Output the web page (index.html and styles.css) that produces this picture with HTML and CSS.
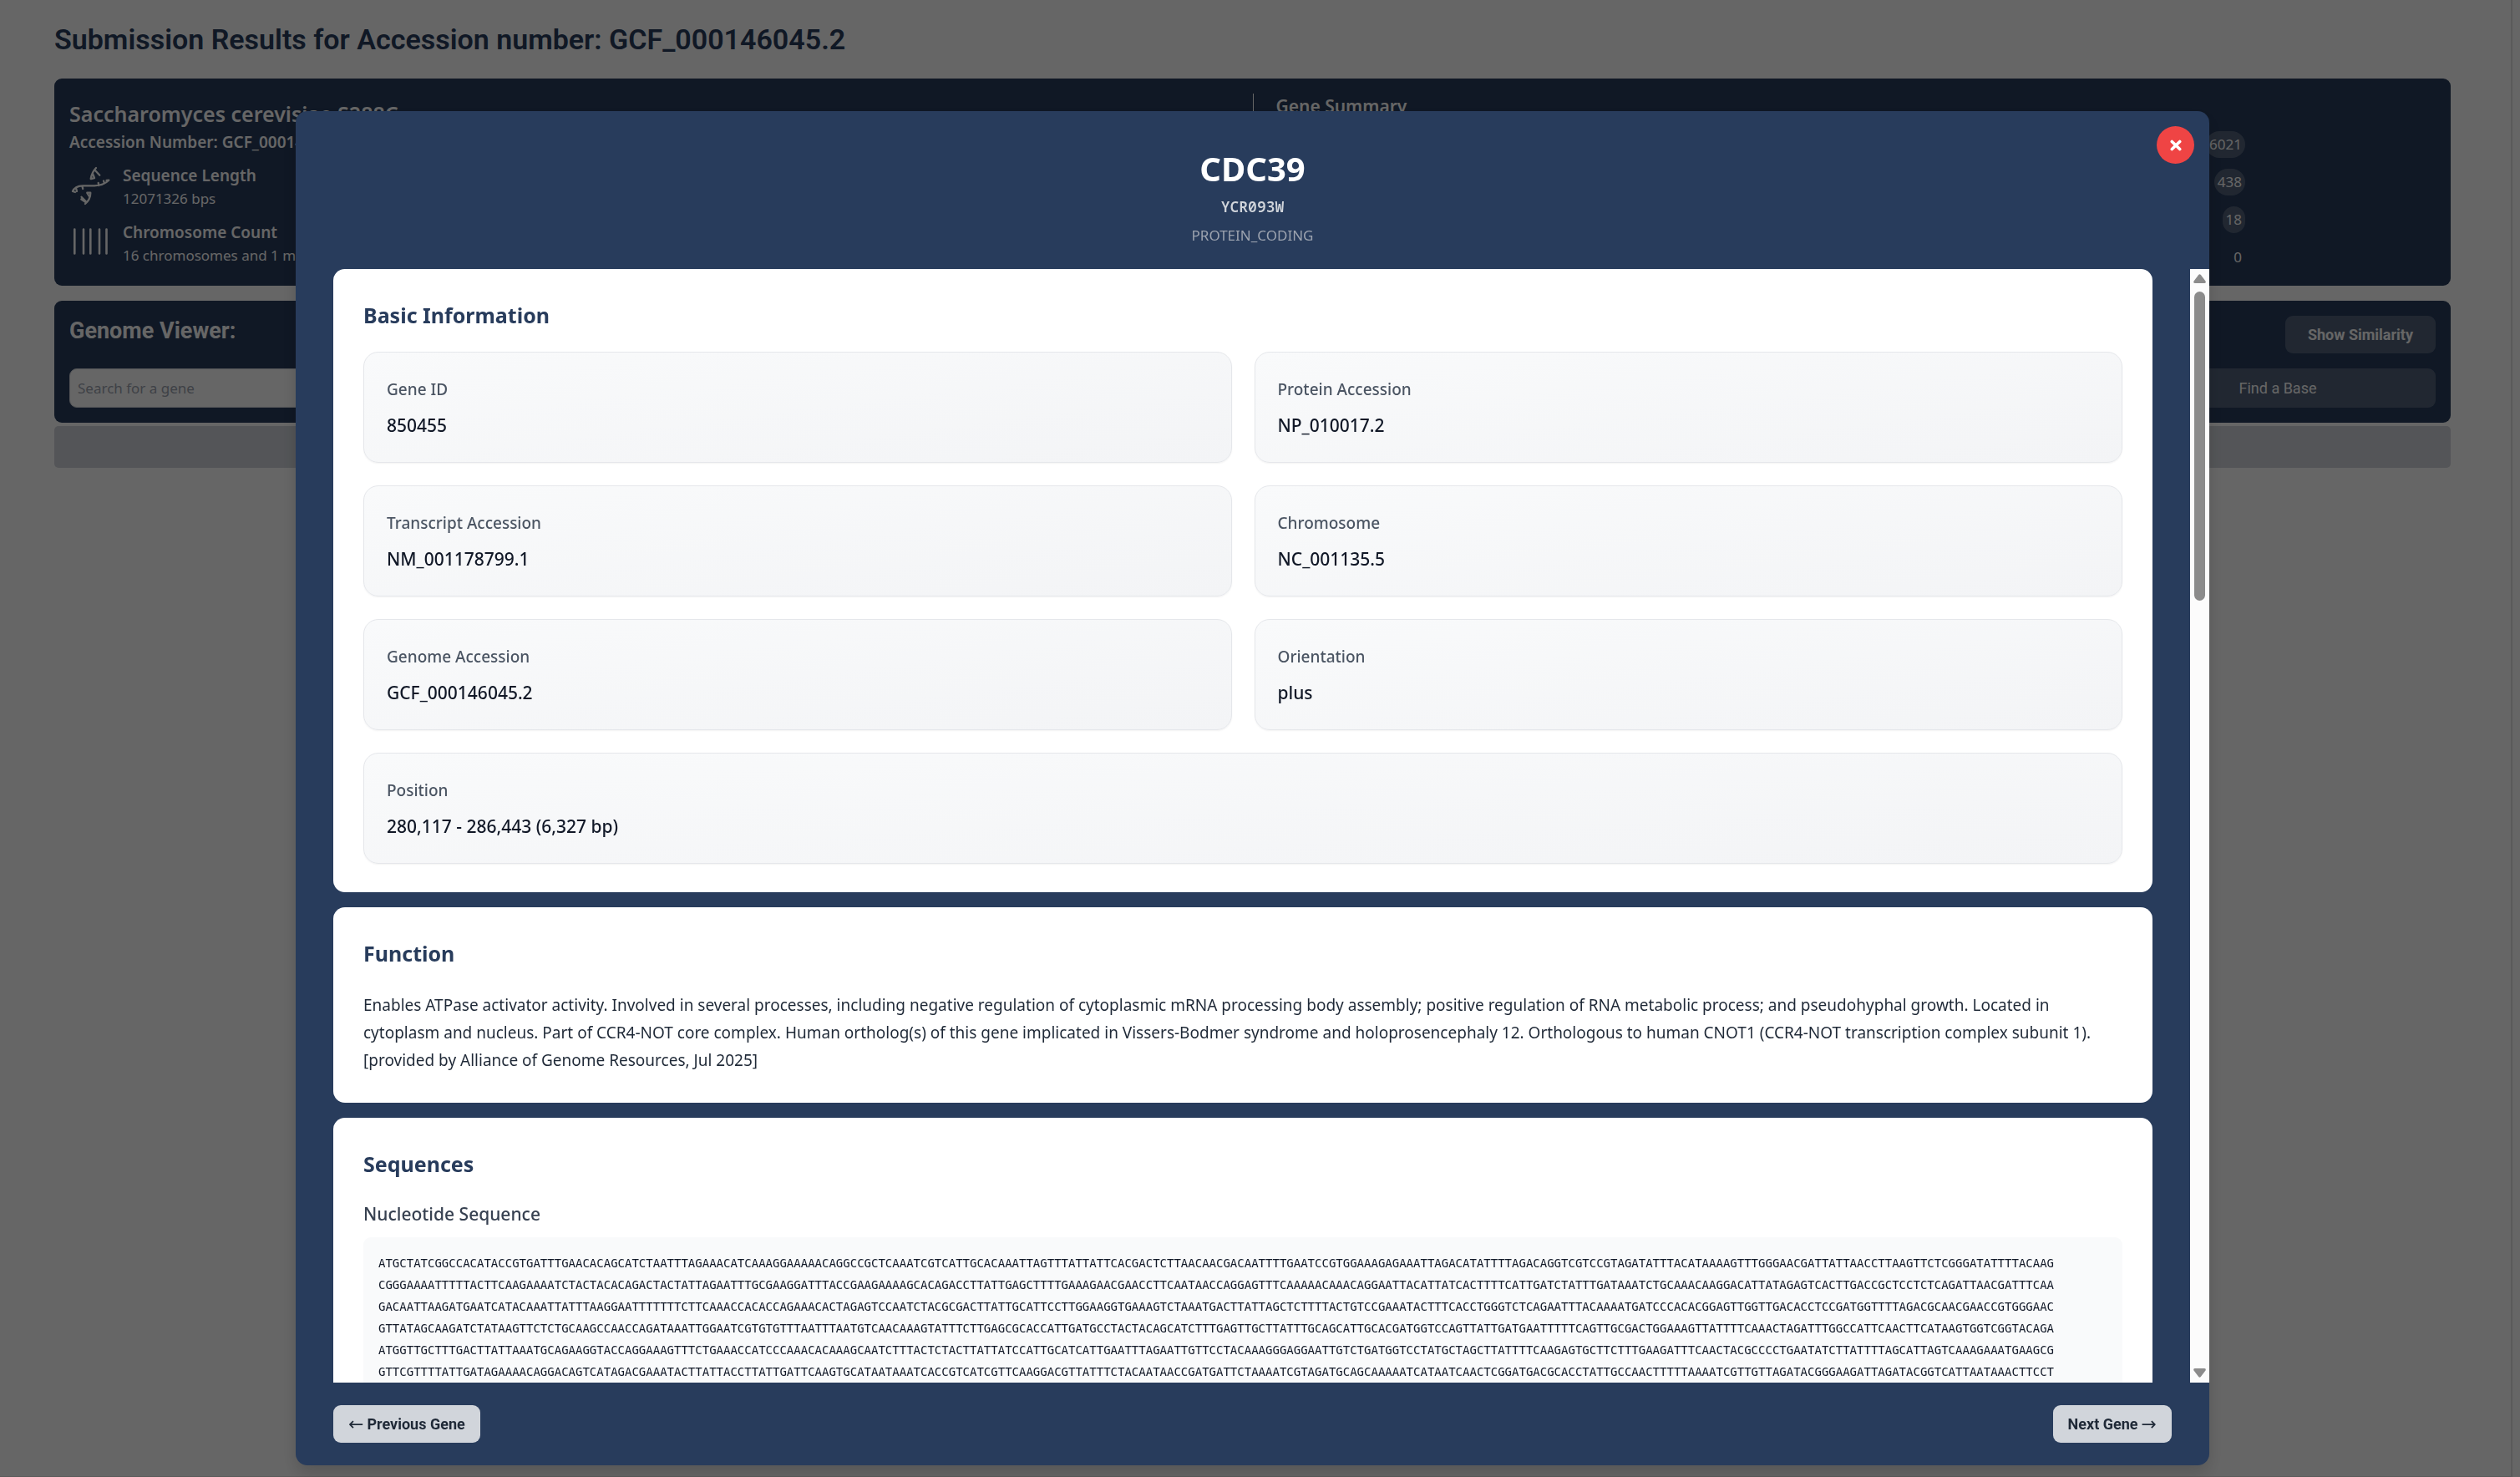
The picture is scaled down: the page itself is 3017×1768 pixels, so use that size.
FILE: index.html
```html
<!DOCTYPE html>
<html lang="en">
<head>
<meta charset="utf-8">
<meta name="viewport" content="width=device-width, initial-scale=1">
<title>Submission Results</title>
<link rel="stylesheet" href="styles.css">
</head>
<body>
<main class="page">
  <h1 class="page-title">Submission Results for Accession number: GCF_000146045.2</h1>

  <section class="panel summary">
    <div class="organism">
      <h2 class="organism-name">Saccharomyces cerevisiae S288C</h2>
      <p class="accession">Accession Number: GCF_000146045.2</p>
      <div class="facts">
        <div class="fact">
          <svg class="fact-icon" viewBox="0 0 50 54" fill="none" stroke="currentColor" stroke-width="2.300" stroke-linecap="round" stroke-linejoin="round" aria-hidden="true">
            <path d="M4 33C6 28 10 26.500 16 26.300H30C38 26 43 24 47 20M8 29l1 4M15.500 27l.7 3M35.300 26l-.6-3M42 23.500l-1-3M44.500 20l2.800-.3M4 33l3 1"/>
            <path d="M32 5C28 9 26.500 13 25.700 18M31 8l5.300 5.700M28 12l2 5M26 18l4-.8"/>
            <path d="M25.300 35C25.300 40 22.500 45 19 48M14.500 39.700l5 5M21.300 35l2.500 4M21.300 34.700h4M14.300 42.500l4.500 3"/>
          </svg>
          <div>
            <h3 class="fact-name">Sequence Length</h3>
            <p class="fact-value">12071326 bps</p>
          </div>
        </div>
        <div class="fact">
          <svg class="fact-icon" viewBox="0 0 50 54" fill="none" stroke="currentColor" stroke-width="2.600" stroke-linecap="round" aria-hidden="true">
            <path d="M6.300 10.500v29M17 10.500v29M25.300 10.500v29M36 10.500v29M44.500 10.500v29"/>
          </svg>
          <div>
            <h3 class="fact-name">Chromosome Count</h3>
            <p class="fact-value">16 chromosomes and 1 mitochondrion</p>
          </div>
        </div>
      </div>
    </div>
    <div class="gene-summary">
      <h2 class="gene-summary-title">Gene Summary</h2>
      <ul class="counts">
        <li class="count">6021</li>
        <li class="count">438</li>
        <li class="count">18</li>
        <li class="count count-empty">0</li>
      </ul>
    </div>
  </section>

  <section class="panel viewer">
    <div class="viewer-head">
      <h2 class="viewer-title">Genome Viewer:</h2>
      <button class="soft-button similarity" type="button">Show Similarity</button>
    </div>
    <div class="viewer-tools">
      <input class="search" type="text" placeholder="Search for a gene" aria-label="Search for a gene">
      <button class="soft-button find-base" type="button">Find a Base</button>
    </div>
  </section>
  <div class="track"></div>
</main>

<div class="overlay">
  <section class="modal" role="dialog" aria-modal="true" aria-labelledby="gene-name">
    <button class="close" type="button" aria-label="Close">
      <svg viewBox="0 0 14 14" width="14" height="14" fill="none" stroke="currentColor" stroke-width="3.600" stroke-linecap="round" aria-hidden="true"><path d="M2.300 2.500l9.400 9M11.700 2.500l-9.400 9"/></svg>
    </button>
    <header class="modal-head">
      <h2 class="gene-name" id="gene-name">CDC39</h2>
      <p class="locus">YCR093W</p>
      <p class="gene-type">PROTEIN_CODING</p>
    </header>

    <div class="modal-body">
      <div class="cards">
        <section class="card">
          <h3 class="card-title">Basic Information</h3>
          <dl class="tiles">
            <div class="tile"><dt>Gene ID</dt><dd>850455</dd></div>
            <div class="tile"><dt>Protein Accession</dt><dd>NP_010017.2</dd></div>
            <div class="tile"><dt>Transcript Accession</dt><dd>NM_001178799.1</dd></div>
            <div class="tile"><dt>Chromosome</dt><dd>NC_001135.5</dd></div>
            <div class="tile"><dt>Genome Accession</dt><dd>GCF_000146045.2</dd></div>
            <div class="tile"><dt>Orientation</dt><dd>plus</dd></div>
            <div class="tile tile-wide"><dt>Position</dt><dd>280,117 - 286,443 (6,327 bp)</dd></div>
          </dl>
        </section>

        <section class="card">
          <h3 class="card-title">Function</h3>
          <p class="description">Enables ATPase activator activity. Involved in several processes, including negative regulation of cytoplasmic mRNA processing body assembly; positive regulation of RNA metabolic process; and pseudohyphal growth. Located in<br>cytoplasm and nucleus. Part of CCR4-NOT core complex. Human ortholog(s) of this gene implicated in Vissers-Bodmer syndrome and holoprosencephaly 12. Orthologous to human CNOT1 (CCR4-NOT transcription complex subunit 1).<br>[provided by Alliance of Genome Resources, Jul 2025]</p>
        </section>

        <section class="card">
          <h3 class="card-title">Sequences</h3>
          <h4 class="sequence-title">Nucleotide Sequence</h4>
<pre class="sequence">ATGCTATCGGCCACATACCGTGATTTGAACACAGCATCTAATTTAGAAACATCAAAGGAAAAACAGGCCGCTCAAATCGTCATTGCACAAATTAGTTTATTATTCACGACTCTTAACAACGACAATTTTGAATCCGTGGAAAGAGAAATTAGACATATTTTAGACAGGTCGTCCGTAGATATTTACATAAAAGTTTGGGAACGATTATTAACCTTAAGTTCTCGGGATATTTTACAAG
CGGGAAAATTTTTACTTCAAGAAAATCTACTACACAGACTACTATTAGAATTTGCGAAGGATTTACCGAAGAAAAGCACAGACCTTATTGAGCTTTTGAAAGAACGAACCTTCAATAACCAGGAGTTTCAAAAACAAACAGGAATTACATTATCACTTTTCATTGATCTATTTGATAAATCTGCAAACAAGGACATTATAGAGTCACTTGACCGCTCCTCTCAGATTAACGATTTCAA
GACAATTAAGATGAATCATACAAATTATTTAAGGAATTTTTTTCTTCAAACCACACCAGAAACACTAGAGTCCAATCTACGCGACTTATTGCATTCCTTGGAAGGTGAAAGTCTAAATGACTTATTAGCTCTTTTACTGTCCGAAATACTTTCACCTGGGTCTCAGAATTTACAAAATGATCCCACACGGAGTTGGTTGACACCTCCGATGGTTTTAGACGCAACGAACCGTGGGAAC
GTTATAGCAAGATCTATAAGTTCTCTGCAAGCCAACCAGATAAATTGGAATCGTGTGTTTAATTTAATGTCAACAAAGTATTTCTTGAGCGCACCATTGATGCCTACTACAGCATCTTTGAGTTGCTTATTTGCAGCATTGCACGATGGTCCAGTTATTGATGAATTTTTCAGTTGCGACTGGAAAGTTATTTTCAAACTAGATTTGGCCATTCAACTTCATAAGTGGTCGGTACAGA
ATGGTTGCTTTGACTTATTAAATGCAGAAGGTACCAGGAAAGTTTCTGAAACCATCCCAAACACAAAGCAATCTTTACTCTACTTATTATCCATTGCATCATTGAATTTAGAATTGTTCCTACAAAGGGAGGAATTGTCTGATGGTCCTATGCTAGCTTATTTTCAAGAGTGCTTCTTTGAAGATTTCAACTACGCCCCTGAATATCTTATTTTAGCATTAGTCAAAGAAATGAAGCG
GTTCGTTTTATTGATAGAAAACAGGACAGTCATAGACGAAATACTTATTACCTTATTGATTCAAGTGCATAATAAATCACCGTCATCGTTCAAGGACGTTATTTCTACAATAACCGATGATTCTAAAATCGTAGATGCAGCAAAAATCATAATCAACTCGGATGACGCACCTATTGCCAACTTTTTAAAATCGTTGTTAGATACGGGAAGATTAGATACGGTCATTAATAAACTTCCT</pre>
        </section>
      </div>
      <div class="scrollbar" aria-hidden="true">
        <svg class="scroll-arrow" viewBox="0 0 15 11"><path d="M6 1.200Q7.500-.6 9 1.200L14.500 8.500Q15.500 11 13 11H2Q-.5 11 .5 8.500Z"/></svg>
        <div class="thumb"></div>
        <svg class="scroll-arrow" viewBox="0 0 15 11"><path d="M6 9.800Q7.500 11.600 9 9.800L14.500 2.500Q15.500 0 13 0H2Q-.5 0 .5 2.500Z"/></svg>
      </div>
    </div>

    <footer class="modal-foot">
      <button class="nav-button" type="button"><span class="arrow">←</span>Previous Gene</button>
      <button class="nav-button" type="button">Next Gene<span class="arrow">→</span></button>
    </footer>
  </section>
</div>
</body>
</html>
```
FILE: styles.css
```css
:root {
  --navy: #283c5c;
  --soft: rgba(255, 255, 255, .2);
  --ui: "Noto Sans", "Open Sans", sans-serif;
  --display: Roboto, "Liberation Sans", sans-serif;
}

* { box-sizing: border-box; }

body {
  margin: 0;
  background: #fff;
  color: #fff;
  font: 400 17px/26px var(--ui);
}

h1, h2, h3, h4, p, ul, dl, dd, pre { margin: 0; }
button, input { border: 0; font: inherit; color: inherit; }
button { cursor: pointer; }

/* Results page */
.page {
  min-height: 100vh;
  margin-right: 9px;
  padding: 27px 72px 0 65px;
  border-right: 2px solid #e2e2e2;
  border-bottom: 1px solid #e2e2e2;
}

.page-title {
  margin-bottom: 27px;
  color: var(--navy);
  font: 600 34px/40px var(--display);
}

.panel {
  margin-bottom: 18px;
  padding: 18px;
  border-radius: 9px;
  background: var(--navy);
}

.summary {
  display: grid;
  grid-template-columns: 1fr 1fr;
}

.organism { padding-top: 6px; }
.organism-name { font-size: 25px; line-height: 36px; font-weight: 600; }
.accession { font-size: 19px; line-height: 32px; font-weight: 600; }

.facts {
  display: grid;
  gap: 12px;
  margin-top: 10px;
}

.fact {
  display: flex;
  gap: 14px;
}

.fact-icon { width: 50px; height: 54px; }
.fact-name { font-size: 19px; line-height: 28px; font-weight: 600; }
.fact-value { line-height: 28px; }

.gene-summary {
  padding: 0 228px 0 27px;
  border-left: 1px solid #fff;
}

.gene-summary-title { font-size: 21px; line-height: 30px; font-weight: 600; }

.counts {
  display: grid;
  justify-items: end;
  gap: 13px;
  margin-top: 15px;
  padding: 0;
  list-style: none;
}

.count {
  padding: 0 4px;
  border-radius: 16px;
  background: var(--soft);
  line-height: 32px;
}

.count-empty { background: none; }

.viewer {
  display: grid;
  gap: 18px;
  margin-bottom: 4px;
}

.viewer-head {
  display: flex;
  justify-content: space-between;
}

.viewer-title { font: 700 27px/36px var(--display); }

.soft-button {
  border-radius: 9px;
  background: var(--soft);
  font: 400 18px/27px var(--display);
}

.similarity {
  padding: 9px 27px;
  font-weight: 700;
}

.viewer-tools {
  display: grid;
  grid-template-columns: 1fr 378px;
  gap: 18px;
}

.search {
  padding: 0 9px;
  border: 1px solid #d1d5db;
  border-radius: 9px;
  background: #fff;
  color: #111827;
}

.search::placeholder { color: #9ca3af; }
.find-base { height: 47px; }

.track {
  height: 50px;
  border-radius: 5px;
  background: #d1d5db;
}

/* Gene details dialog */
.overlay {
  position: fixed;
  inset: 0;
  display: flex;
  padding: 133px 372px 14px 354px;
  background: rgba(0, 0, 0, .6);
}

.modal {
  position: relative;
  flex: 1;
  min-width: 0;
  display: flex;
  flex-direction: column;
  border-radius: 14px;
  background: var(--navy);
  box-shadow: 0 10px 20px rgba(0, 0, 0, .15);
}

.close {
  position: absolute;
  top: 18px;
  right: 18px;
  display: grid;
  place-items: center;
  width: 45px;
  height: 45px;
  padding: 0;
  border-radius: 50%;
  background: #ef4444;
}

.modal-head {
  display: grid;
  gap: 8px;
  padding: 45px 0 27px;
  text-align: center;
}

.gene-name { font-size: 40px; line-height: 48px; font-weight: 700; }

.locus {
  color: #d1d5db;
  font: 600 18px/27px "Noto Sans Mono", "DejaVu Sans Mono", monospace;
}

.gene-type { color: #9ca3af; }

.modal-body {
  flex: 1;
  min-height: 0;
  display: grid;
  grid-template-columns: minmax(0, 1fr) 23px;
  grid-template-rows: minmax(0, 1fr);
}

.cards {
  overflow: hidden;
  display: flex;
  flex-direction: column;
  gap: 18px;
  padding: 0 45px;
}

.card {
  flex: none;
  padding: 36px 36px 34px;
  border-radius: 14px;
  background: #fff;
}

.card-title {
  margin-bottom: 25px;
  color: var(--navy);
  font-size: 25px;
  line-height: 38px;
  font-weight: 700;
}

.tiles {
  display: grid;
  grid-template-columns: 1fr 1fr;
  gap: 27px;
}

.tile {
  display: grid;
  gap: 9px;
  padding: 27px;
  border: 1px solid #e5e7eb;
  border-radius: 18px;
  background: linear-gradient(to bottom right, #f9fafb, #f3f4f6);
  box-shadow: 0 1px 2px rgba(0, 0, 0, .05);
  line-height: 34px;
}

.tile-wide { grid-column: span 2; }
.tile dt { color: #4b5563; font-size: 19px; font-weight: 500; }
.tile dd { color: #111827; font-size: 21px; font-weight: 500; }

.description {
  padding-top: 2px;
  color: #1f2937;
  font-size: 19px;
  line-height: 33px;
}

.sequence-title {
  margin-bottom: 12px;
  color: #374151;
  font-size: 21px;
  line-height: 32px;
  font-weight: 500;
}

.sequence {
  overflow: hidden;
  padding: 18px;
  border-radius: 9px;
  background: #f9fafb;
  color: #111827;
  font: 400 14px/26px "DejaVu Sans Mono", monospace;
}

.scrollbar {
  display: flex;
  flex-direction: column;
  align-items: center;
  padding: 6px 0;
  background: #fcfcfc;
}

.scroll-arrow { width: 15px; height: 11px; fill: #8b8b8b; }
.scroll-arrow:last-child { margin-top: auto; }

.thumb {
  width: 13px;
  height: 28%;
  margin-top: 10px;
  border-radius: 7px;
  background: #8b8b8b;
}

.modal-foot {
  display: flex;
  justify-content: space-between;
  padding: 27px 45px;
}

.nav-button {
  display: flex;
  align-items: center;
  gap: 4px;
  padding: 9px 18px;
  border-radius: 9px;
  background: #d1d5db;
  color: #1f2937;
  font: 700 18px/27px var(--display);
}

.arrow { font: 400 22px/27px "DejaVu Sans", sans-serif; }
```
